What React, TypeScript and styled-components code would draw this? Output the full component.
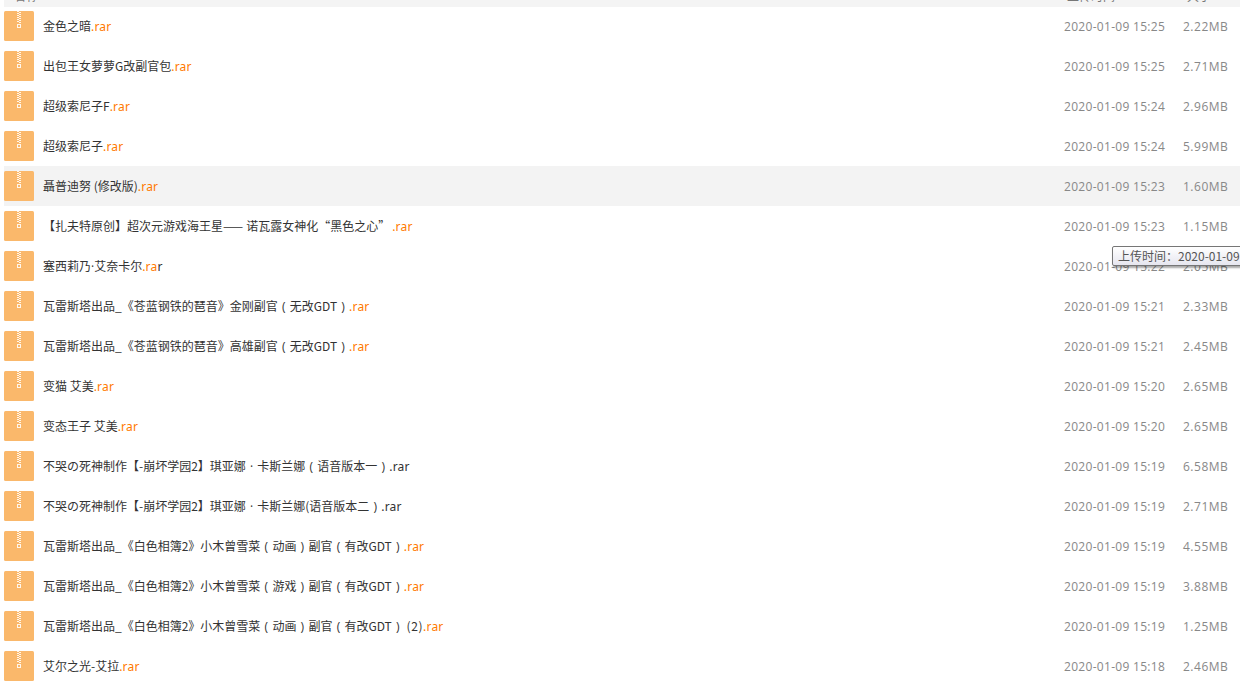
import React from "react";
import styled, { createGlobalStyle } from "styled-components";

const Global = createGlobalStyle`
  html, body { margin: 0; padding: 0; background: #fff; overflow: hidden; }
  body { font-family: "Noto Sans CJK SC", "Open Sans", sans-serif; }
`;

const Page = styled.div`
  position: relative;
  width: 1240px;
  height: 682px;
  overflow: hidden;
`;

const Head = styled.div`
  position: relative;
  height: 7px;
  margin-bottom: -1px;
  margin-left: 4px;
  background: #f4f4f4;
  overflow: hidden;
`;

const HeadInner = styled.div`
  display: flex;
  align-items: flex-end;
  height: 2px;
  font-size: 12px;
  line-height: 12px;
  color: #777;
  white-space: nowrap;
`;

const HeadName = styled.div`
  flex: 1;
  padding-left: 10px;
`;

const HeadTime = styled.div`
  width: 120px;
  flex: none;
`;

const HeadSize = styled.div`
  width: 53px;
  flex: none;
`;

const Row = styled.div<{ $active?: boolean }>`
  display: flex;
  align-items: center;
  height: 40px;
  margin-left: 4px;
  background: ${(p) => (p.$active ? "#f3f3f3" : "#fff")};
`;

const IconBox = styled.svg`
  width: 30px;
  height: 30px;
  flex: none;
  display: block;
`;

const Name = styled.div`
  flex: 1;
  margin-left: 9px;
  font-size: 12px;
  line-height: 20px;
  color: #333;
  white-space: pre;
  overflow: hidden;
`;

const Ext = styled.span`
  color: #ff7a00;
  font-family: "Noto Sans", sans-serif;
  letter-spacing: 0.2px;
`;

const Plain = styled.span`
  font-family: "Noto Sans", sans-serif;
  letter-spacing: 0.2px;
`;

const Paren = styled.span`
  display: inline-block;
  width: 12px;
  text-align: center;
  font-family: "Open Sans", sans-serif;
`;

const Dot = styled.span<{ $spaced?: boolean }>`
  font-family: "Open Sans", sans-serif;
  padding: 0 ${(p) => (p.$spaced ? "1px" : "0")};
`;

const Dash = styled.span`
  letter-spacing: 3px;
`;

const CloseQuote = styled.span`
  padding-right: 2px;
`;

const Wide = styled.span`
  letter-spacing: 0.6px;
`;

const Time = styled.div`
  width: 105px;
  flex: none;
  margin-right: 14px;
  font-family: "Open Sans", sans-serif;
  font-size: 12px;
  letter-spacing: 0.3px;
  color: #888;
  text-align: left;
  white-space: nowrap;
`;

const Size = styled.div`
  width: 57px;
  flex: none;
  padding-right: 12px;
  box-sizing: border-box;
  font-family: "Open Sans", sans-serif;
  font-size: 12px;
  letter-spacing: 0.5px;
  color: #888;
  text-align: right;
  white-space: nowrap;
`;

const Tip = styled.div`
  position: absolute;
  left: 1112px;
  top: 246px;
  width: 140px;
  height: 20px;
  box-sizing: border-box;
  border: 1px solid #767676;
  border-radius: 2px;
  background: linear-gradient(#ffffff, #e6e6ef);
  box-shadow: 1px 2px 2px rgba(0, 0, 0, 0.35);
  padding-left: 5px;
  font-size: 12px;
  line-height: 18px;
  color: #555;
  white-space: nowrap;
`;

const zipperRows = [0, 1, 2, 3, 4, 5, 6, 7, 8, 9, 10, 11];

const ZipIcon = () => (
  <IconBox viewBox="0 0 30 30">
    <rect x="0" y="0" width="30" height="30" rx="1.5" fill="#fab86b" />
    <g fill="#fff6ea">
      {zipperRows.map((y) => (
        <rect key={y} x={y % 2 ? 15 : 13} y={y} width="2" height="1" />
      ))}
    </g>
    <rect x="13.5" y="13.5" width="3" height="3" fill="none" stroke="#fff6ea" strokeWidth="1" />
  </IconBox>
);

const renderName = (text: string) =>
  text.split(/(（|）| · |·|——|”|\(2\))/).map((part, i) => {
    if (part === "（") return <Paren key={i}>(</Paren>;
    if (part === "）") return <Paren key={i}>)</Paren>;
    if (part === " · ") return <Dot key={i} $spaced> · </Dot>;
    if (part === "·") return <Dot key={i}>·</Dot>;
    if (part === "——") return <Dash key={i}>——</Dash>;
    if (part === "”") return <CloseQuote key={i}>”</CloseQuote>;
    if (part === "(2)") return <Wide key={i}>(2)</Wide>;
    return part;
  });

type Item = { name: string; ext: React.ReactNode; time: string; size: string; active?: boolean };

const orange = <Ext>.rar</Ext>;
const plain = <Plain>.rar</Plain>;

const items: Item[] = [
  { name: "金色之暗", ext: orange, time: "2020-01-09 15:25", size: "2.22MB" },
  { name: "出包王女萝萝G改副官包", ext: orange, time: "2020-01-09 15:25", size: "2.71MB" },
  { name: "超级索尼子F", ext: orange, time: "2020-01-09 15:24", size: "2.96MB" },
  { name: "超级索尼子", ext: orange, time: "2020-01-09 15:24", size: "5.99MB" },
  { name: "聶普迪努 (修改版)", ext: orange, time: "2020-01-09 15:23", size: "1.60MB", active: true },
  { name: "【扎夫特原创】超次元游戏海王星——诺瓦露女神化“黑色之心”", ext: orange, time: "2020-01-09 15:23", size: "1.15MB" },
  { name: "塞西莉乃·艾奈卡尔", ext: <><Ext>.ra</Ext><Plain>r</Plain></>, time: "2020-01-09 15:22", size: "2.05MB" },
  { name: "瓦雷斯塔出品_《苍蓝钢铁的琶音》金刚副官（无改GDT）", ext: orange, time: "2020-01-09 15:21", size: "2.33MB" },
  { name: "瓦雷斯塔出品_《苍蓝钢铁的琶音》高雄副官（无改GDT）", ext: orange, time: "2020-01-09 15:21", size: "2.45MB" },
  { name: "变猫 艾美", ext: orange, time: "2020-01-09 15:20", size: "2.65MB" },
  { name: "变态王子 艾美", ext: orange, time: "2020-01-09 15:20", size: "2.65MB" },
  { name: "不哭の死神制作【-崩坏学园2】琪亚娜 · 卡斯兰娜（语音版本一）", ext: plain, time: "2020-01-09 15:19", size: "6.58MB" },
  { name: "不哭の死神制作【-崩坏学园2】琪亚娜 · 卡斯兰娜(语音版本二）", ext: plain, time: "2020-01-09 15:19", size: "2.71MB" },
  { name: "瓦雷斯塔出品_《白色相簿2》小木曾雪菜（动画）副官（有改GDT）", ext: orange, time: "2020-01-09 15:19", size: "4.55MB" },
  { name: "瓦雷斯塔出品_《白色相簿2》小木曾雪菜（游戏）副官（有改GDT）", ext: orange, time: "2020-01-09 15:19", size: "3.88MB" },
  { name: "瓦雷斯塔出品_《白色相簿2》小木曾雪菜（动画）副官（有改GDT） (2)", ext: orange, time: "2020-01-09 15:19", size: "1.25MB" },
  { name: "艾尔之光-艾拉", ext: orange, time: "2020-01-09 15:18", size: "2.46MB" },
];

export default function App() {
  return (
    <Page>
      <Global />
      <Head>
        <HeadInner>
          <HeadName>名称</HeadName>
          <HeadTime>上传时间</HeadTime>
          <HeadSize>大小</HeadSize>
        </HeadInner>
      </Head>
      {items.map((it, i) => (
        <Row key={i} $active={it.active}>
          <ZipIcon />
          <Name>
            {renderName(it.name)}
            {it.ext}
          </Name>
          <Time>{it.time}</Time>
          <Size>{it.size}</Size>
        </Row>
      ))}
      <Tip>上传时间：2020-01-09 15:22:10</Tip>
    </Page>
  );
}
